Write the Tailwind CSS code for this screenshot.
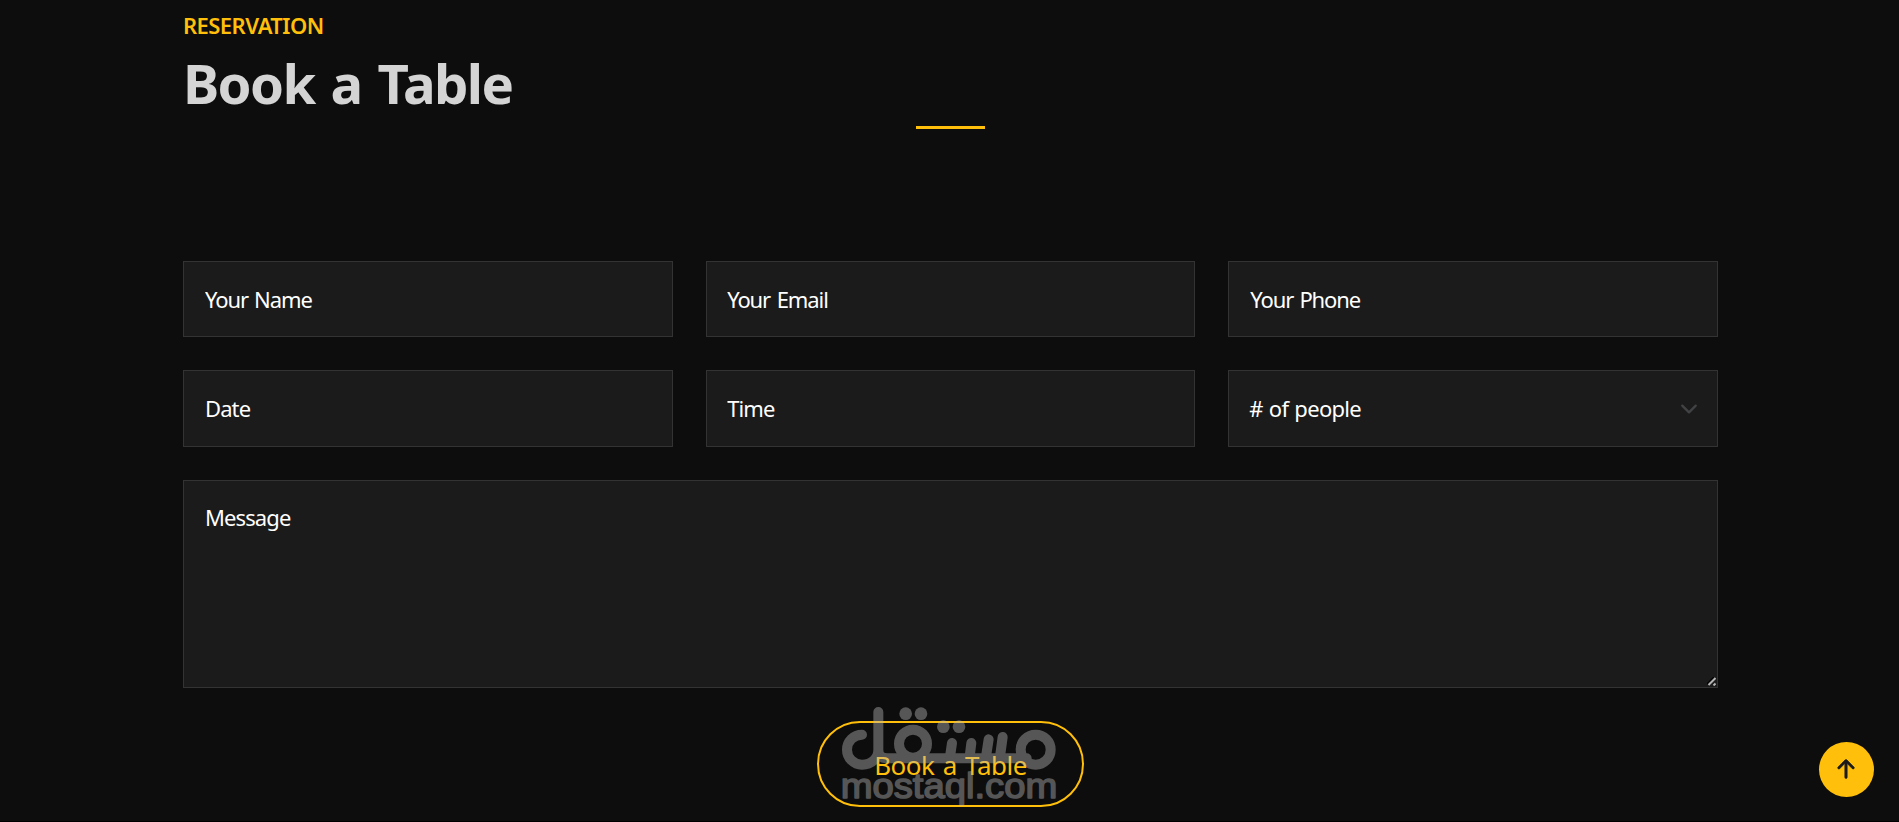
<!DOCTYPE html>
<html lang="en">
  <head>
    <meta charset="UTF-8" />
    <meta name="viewport" content="width=device-width, initial-scale=1.0" />
    <title>Book a Table</title>
    <script src="https://cdn.jsdelivr.net/npm/@tailwindcss/browser@4"></script>
  </head>
  <body class="bg-[#0d0d0d] font-['Noto_Sans',sans-serif] text-white h-[822px] overflow-hidden">
    <section class="relative h-[821px] w-full">
      <div class="ml-[183px] w-[1535px]">
        <header class="pt-[8px]">
          <h2 class="text-[22px] leading-[34px] font-semibold tracking-[-0.55px] text-[#ffbf0a]">RESERVATION</h2>
          <p class="pt-[6px] text-[54.5px] leading-[70px] font-bold tracking-[-1.65px] [word-spacing:3.5px] text-[#d4d4d4]">Book a Table</p>
          <div class="mx-auto mt-[8px] h-[3px] w-[69px] bg-[#ffbf0a]"></div>
        </header>

        <form class="mt-[132px] text-[22px] tracking-[-0.9px]">
          <div class="grid grid-cols-3 gap-x-[33px] gap-y-[33px]">
            <input type="text" placeholder="Your Name" class="h-[76px] border border-[#333] bg-[#1b1b1b] px-[21px] tracking-[-1.1px] [word-spacing:1.5px] placeholder:text-white" />
            <input type="email" placeholder="Your Email" class="h-[76px] border border-[#333] bg-[#1b1b1b] px-[20.5px] tracking-[-1.1px] [word-spacing:2px] placeholder:text-white" />
            <input type="text" placeholder="Your Phone" class="h-[76px] border border-[#333] bg-[#1b1b1b] px-[21px] tracking-[-1.1px] [word-spacing:1.5px] placeholder:text-white" />
            <input type="text" placeholder="Date" class="h-[77px] border border-[#333] bg-[#1b1b1b] px-[21px] pb-[2px] placeholder:text-white" />
            <input type="text" placeholder="Time" class="h-[77px] border border-[#333] bg-[#1b1b1b] px-[20.5px] pb-[2px] placeholder:text-white" />
            <div class="flex h-[77px] items-center justify-between border border-[#333] bg-[#1b1b1b] pr-[19px] pl-[20px]">
              <span class="tracking-[-0.7px] [word-spacing:1px]"># of people</span>
              <svg class="size-[18px]" viewBox="0 0 16 16" fill="none" stroke="#404244" stroke-width="2" stroke-linecap="round" stroke-linejoin="round"><path d="m2 5 6 6 6-6" /></svg>
            </div>
          </div>
          <div class="relative mt-[33px]">
            <textarea placeholder="Message" class="block h-[208px] w-full resize-none border border-[#333] bg-[#1b1b1b] px-[21px] pt-[20px] leading-[33px] placeholder:text-white"></textarea>
            <svg class="absolute right-[2px] bottom-[2px] size-[9px]" viewBox="0 0 9 9"><path d="M0 7 7 0" stroke="#000" stroke-width="1.5" /><path d="M1.5 8 8.5 1M6.5 8.5l2-2" stroke="#b4b4b4" stroke-width="2" /></svg>
          </div>
          <button type="button" class="mx-auto mt-[33px] block h-[86px] w-[267px] rounded-full border-2 border-[#ffbf0a] pt-[2px] text-[26px] tracking-[-0.5px] [word-spacing:2px] text-[#ffbf0a]">Book a Table</button>
        </form>
      </div>

      <!-- watermark -->
      <svg class="pointer-events-none absolute top-[690px] left-[800px] h-[132px] w-[300px] opacity-42" viewBox="0 0 900 396" fill="none" stroke="#bbb" stroke-width="30" stroke-linecap="round" stroke-linejoin="round">
        <path d="M186 134a45 45 0 1 0 0 90C215 224 235 205 235 179V66M235 179Q235 205 262 205H680" />
        <circle cx="339" cy="161" r="42" />
        <circle cx="707" cy="179" r="45" />
        <path d="M456 159L450 200M514 159L509 200M566 148L558 200M608 141L600 200" />
        <g fill="#bbb" stroke="none">
          <circle cx="317" cy="71" r="19" />
          <circle cx="363" cy="71" r="19" />
          <circle cx="430" cy="110" r="19" />
          <circle cx="477" cy="110" r="19" />
          <text x="122" y="325" textLength="650" lengthAdjust="spacingAndGlyphs" font-family="Liberation Sans" font-size="104" stroke="#bbb" stroke-width="4.5">mostaql.com</text>
        </g>
      </svg>

      <a href="#" class="absolute top-[742px] left-[1819px] flex size-[55px] items-center justify-center rounded-full bg-[#ffbf0a]">
        <svg class="-mt-[2px] -ml-px size-[38px]" viewBox="0 0 16 16" fill="#1b1b1b" stroke="#1b1b1b" stroke-width="0.25"><path d="M8 12a.5.5 0 0 0 .5-.5V5.707l2.146 2.147a.5.5 0 0 0 .708-.708l-3-3a.5.5 0 0 0-.708 0l-3 3a.5.5 0 1 0 .708.708L7.5 5.707V11.5a.5.5 0 0 0 .5.5z" /></svg>
      </a>
    </section>
    <div class="h-px bg-black"></div>
  </body>
</html>
